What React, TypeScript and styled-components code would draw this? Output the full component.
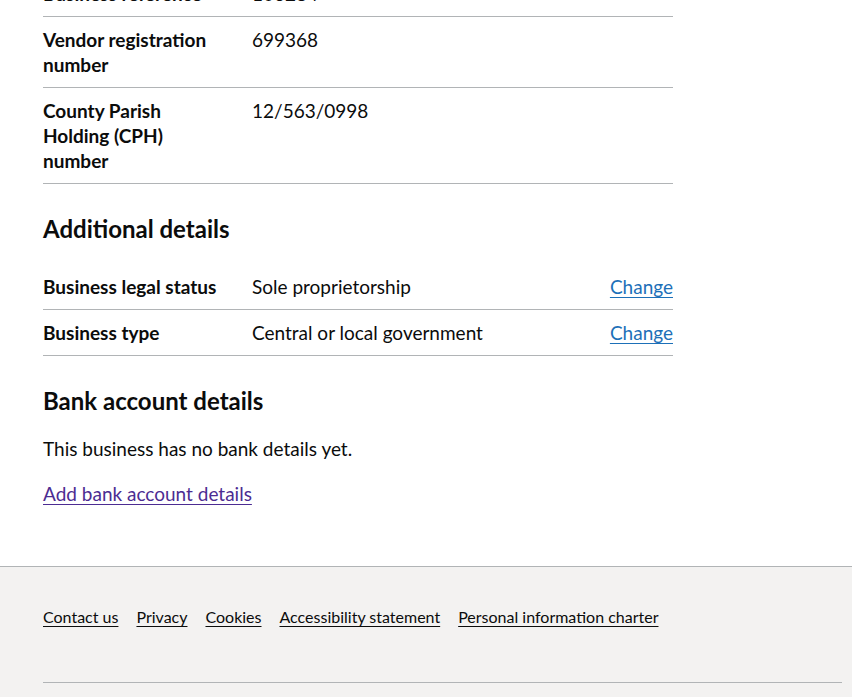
import React from "react";
import styled, { createGlobalStyle } from "styled-components";

const Global = createGlobalStyle`
  html, body { margin: 0; padding: 0; background: #ffffff; }
  body {
    font-family: Lato, "Liberation Sans", Arial, sans-serif;
    color: #0b0c0c;
    -webkit-font-smoothing: antialiased;
  }
  * { box-sizing: border-box; }
`;

const Main = styled.main`
  padding: 0 43px 40px 43px;
`;

const Column = styled.div`
  width: 630px;
`;

const Viewport = styled.div`
  margin-top: -29px;
`;

const SummaryList = styled.dl`
  margin: 0 0 30px 0;
`;

const Row = styled.div<{ $actions?: boolean }>`
  display: grid;
  grid-template-columns: ${(p) => (p.$actions ? "209px 1fr auto" : "209px 1fr")};
  border-bottom: 1px solid #b1b4b6;
`;

const Key = styled.dt`
  padding: 10px 25px 10px 0;
  margin: 0;
  font-weight: 700;
  font-size: 19px;
  line-height: 25px;
`;

const Value = styled.dd`
  padding: 10px 20px 10px 0;
  margin: 0;
  font-size: 19px;
  line-height: 25px;
`;

const Actions = styled.dd`
  padding: 10px 0;
  margin: 0;
  font-size: 19px;
  line-height: 25px;
  text-align: right;
`;

const Link = styled.a<{ $visited?: boolean }>`
  color: ${(p) => (p.$visited ? "#4c2c92" : "#1d70b8")};
  text-decoration: underline;
  text-decoration-thickness: 1px;
  text-underline-offset: 0.16em;
  cursor: pointer;
`;

const Heading = styled.h2`
  margin: 0 0 20px 0;
  font-size: 24px;
  line-height: 30px;
  font-weight: 700;
`;

const Body = styled.p`
  margin: 0 0 20px 0;
  font-size: 19px;
  line-height: 25px;
`;

const Footer = styled.footer`
  background: #f3f2f1;
  border-top: 1px solid #b1b4b6;
  padding: 40px 10px 30px 43px;
`;

const FooterList = styled.ul`
  list-style: none;
  margin: 0 0 55px 0;
  padding: 0;
  display: flex;
  gap: 18px;
`;

const FooterItem = styled.li`
  font-size: 16px;
  line-height: 20px;
`;

const FooterLink = styled.a`
  color: #0b0c0c;
  text-decoration: underline;
  text-decoration-thickness: 1px;
  text-underline-offset: 0.16em;
`;

const FooterRule = styled.hr`
  margin: 0;
  border: 0;
  border-top: 1px solid #b1b4b6;
`;

const FooterSpacer = styled.div`
  height: 40px;
`;

const topRows = [
  { key: "Business reference", value: "106284" },
  { key: "Vendor registration number", value: "699368" },
  { key: "County Parish Holding (CPH) number", value: "12/563/0998" },
];

const additional = [
  { key: "Business legal status", value: "Sole proprietorship" },
  { key: "Business type", value: "Central or local government" },
];

const footerLinks = [
  "Contact us",
  "Privacy",
  "Cookies",
  "Accessibility statement",
  "Personal information charter",
];

export default function App() {
  return (
    <>
      <Global />
      <Main>
        <Column>
          <Viewport>
            <SummaryList>
              {topRows.map((r) => (
                <Row key={r.key}>
                  <Key>{r.key}</Key>
                  <Value>{r.value}</Value>
                </Row>
              ))}
            </SummaryList>
          </Viewport>
          <Heading>Additional details</Heading>
          <SummaryList>
            {additional.map((r) => (
              <Row key={r.key} $actions>
                <Key>{r.key}</Key>
                <Value>{r.value}</Value>
                <Actions>
                  <Link>Change</Link>
                </Actions>
              </Row>
            ))}
          </SummaryList>
          <Heading>Bank account details</Heading>
          <Body>This business has no bank details yet.</Body>
          <Body>
            <Link $visited>Add bank account details</Link>
          </Body>
        </Column>
      </Main>
      <Footer>
        <FooterList>
          {footerLinks.map((l) => (
            <FooterItem key={l}>
              <FooterLink>{l}</FooterLink>
            </FooterItem>
          ))}
        </FooterList>
        <FooterRule />
        <FooterSpacer />
      </Footer>
    </>
  );
}
